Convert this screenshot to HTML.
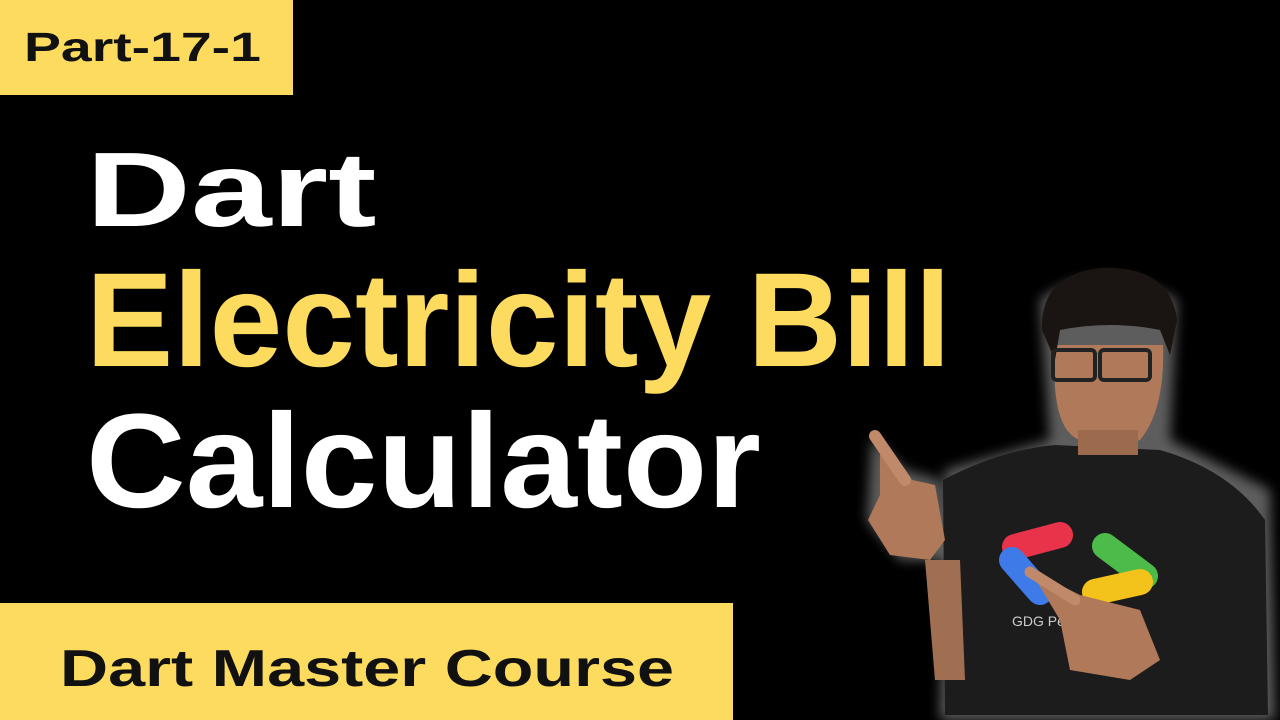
<!DOCTYPE html>
<html><head><style>
html,body{margin:0;padding:0;background:#000;width:1280px;height:720px;overflow:hidden;position:relative;font-family:"Liberation Sans",sans-serif;}
.tag{position:absolute;left:0;top:0;width:293px;height:95px;background:#fcdb5e;}
.tag span{position:absolute;left:24px;top:24px;font-size:41px;font-weight:bold;color:#111;transform:scaleX(1.35);transform-origin:left;white-space:nowrap}
.t{position:absolute;left:86px;font-weight:bold;font-size:134px;line-height:1;white-space:nowrap;transform-origin:left;}
.bot{position:absolute;left:0;top:603px;width:733px;height:117px;background:#fcdb5e;}
.bot span{position:absolute;left:60px;top:36px;font-size:52px;font-weight:bold;color:#111;transform:scaleX(1.28);transform-origin:left;white-space:nowrap}
svg{position:absolute;left:0;top:0}
</style></head><body>
<div class="tag"><span>Part-17-1</span></div>
<div class="t" style="top:137px;font-size:106px;color:#fff;transform:scaleX(1.37)">Dart</div>
<div class="t" style="top:254px;color:#fcdb5e;transform:scaleX(0.976)">Electricity Bill</div>
<div class="t" style="top:395px;color:#fff;transform:scaleX(1.03)">Calculator</div>
<div class="bot"><span>Dart Master Course</span></div>
<svg width="1280" height="720" viewBox="0 0 1280 720">
<defs><filter id="g"><feGaussianBlur stdDeviation="6"/></filter></defs>
<g filter="url(#g)" opacity="0.55" fill="#aaa">
<path d="M1040 300 Q1100 255 1177 300 L1170 440 L1270 490 L1275 720 L940 720 L945 470 L1050 440 Z"/>
<path d="M872 437 L905 470 L940 480 L945 560 L900 560 L867 520 Z"/>
</g>
<path d="M943 480 Q1000 450 1055 445 L1160 450 Q1230 470 1265 520 L1268 715 L945 715 Z" fill="#1c1c1c"/>
<path d="M1055 345 Q1050 430 1080 440 Q1110 450 1140 440 Q1165 410 1163 345 Z" fill="#b07a5a"/>
<rect x="1078" y="430" width="60" height="25" fill="#9c6a4c"/>
<path d="M1042 330 Q1040 275 1100 268 Q1170 265 1177 320 L1170 355 L1160 330 Q1110 320 1060 330 L1055 360 Z" fill="#1a1512"/>
<rect x="1053" y="350" width="42" height="30" rx="4" fill="none" stroke="#222" stroke-width="4"/>
<rect x="1100" y="350" width="50" height="30" rx="4" fill="none" stroke="#222" stroke-width="4"/>
<path d="M880 440 L912 480 L935 485 L945 540 L930 560 L890 555 L868 520 L880 495 Z" fill="#b07a5a"/>
<path d="M875 436 L905 480" stroke="#c08a6a" stroke-width="12" stroke-linecap="round"/>
<path d="M925 560 L960 560 L965 680 L935 680 Z" fill="#a06e50"/>
<g stroke-linecap="round" stroke-width="26">
<path d="M1015 547 L1060 535" stroke="#e8334a"/>
<path d="M1012 560 L1040 592" stroke="#3e7be8"/>
<path d="M1105 546 L1145 576" stroke="#4cbb4a"/>
<path d="M1095 592 L1140 582" stroke="#f3c21b"/>
</g>
<text x="1012" y="626" font-size="14" fill="#ccc" font-family="Liberation Sans">GDG Pe</text>
<path d="M1030 570 L1080 595 L1140 610 L1160 660 L1130 680 L1070 670 L1060 620 Z" fill="#b07a5a"/>
<path d="M1030 572 L1075 600" stroke="#c08a6a" stroke-width="11" stroke-linecap="round"/>
</svg>
</body></html>
